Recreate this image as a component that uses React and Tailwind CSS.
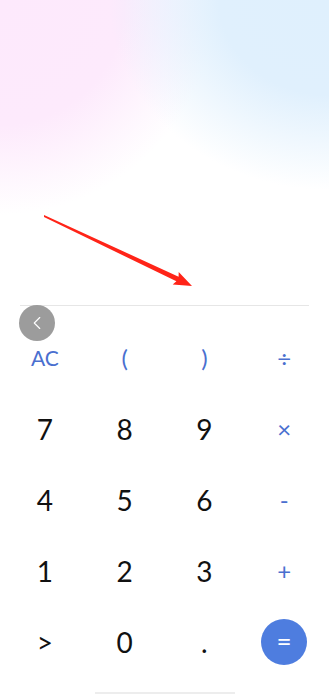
import React from 'react';
import { ChevronLeft } from 'lucide-react';

const keys = [
  ['AC', 'op'], ['(', 'op'], [')', 'op'], ['÷', 'op'],
  ['7', 'num'], ['8', 'num'], ['9', 'num'], ['×', 'op'],
  ['4', 'num'], ['5', 'num'], ['6', 'num'], ['-', 'op'],
  ['1', 'num'], ['2', 'num'], ['3', 'num'], ['+', 'op'],
  ['>', 'num'], ['0', 'num'], ['.', 'num'], ['=', 'eq'],
];

const Key = ({ label, kind }) => {
  if (kind === 'eq') {
    return (
      <div className="flex items-center justify-center">
        <div className="w-[46px] h-[46px] rounded-full bg-[#4e7ddf] flex items-center justify-center text-white text-[26px] leading-none pb-[2px]">
          =
        </div>
      </div>
    );
  }
  if (kind === 'op') {
    const size = label === 'AC' ? 'text-[21px]' : 'text-[24px]';
    return (
      <div className={`flex items-center justify-center text-[#4a6fcf] ${size}`}>
        {label}
      </div>
    );
  }
  return (
    <div className="flex items-center justify-center text-[#111] text-[28px]">
      {label}
    </div>
  );
};

const App = () => {
  return (
    <div className="relative h-[695px] w-full overflow-hidden bg-white" style={{ fontFamily: 'Lato, "Open Sans", sans-serif' }}>
      {/* display area with gradient */}
      <div className="relative h-[305px] bg-[radial-gradient(220px_190px_at_100%_0%,#dff0fd_0%,#e0f0fd_50%,rgba(224,240,253,0)_100%),radial-gradient(215px_215px_at_0%_0%,#fde9fc_0%,#fdeafc_58%,rgba(253,234,252,0)_100%)]">
        <svg className="absolute left-0 top-0" width="329" height="305" viewBox="0 0 329 305">
          <polygon
            fill="#ff2418"
            points="44,215 178.6,276.7 178.7,272 192,286 172.7,284.6 176.4,281.3 44,217"
          />
        </svg>
      </div>

      {/* divider */}
      <div className="mx-5 h-px bg-[#e6e6e6]" />

      {/* keypad */}
      <div className="relative pt-4 px-[5px]">
        <div className="absolute left-[19px] top-[-1px] w-9 h-9 rounded-full bg-[#9c9c9c] flex items-center justify-center">
          <ChevronLeft size={22} strokeWidth={1.25} className="text-white" />
        </div>
        <div className="grid grid-cols-4 auto-rows-[71px]">
          {keys.map(([label, kind], i) => (
            <Key key={i} label={label} kind={kind} />
          ))}
        </div>
      </div>

      <div className="mx-auto mt-[15px] w-[140px] h-[2px] bg-[#ededed]" />
    </div>
  );
};

export default App;
